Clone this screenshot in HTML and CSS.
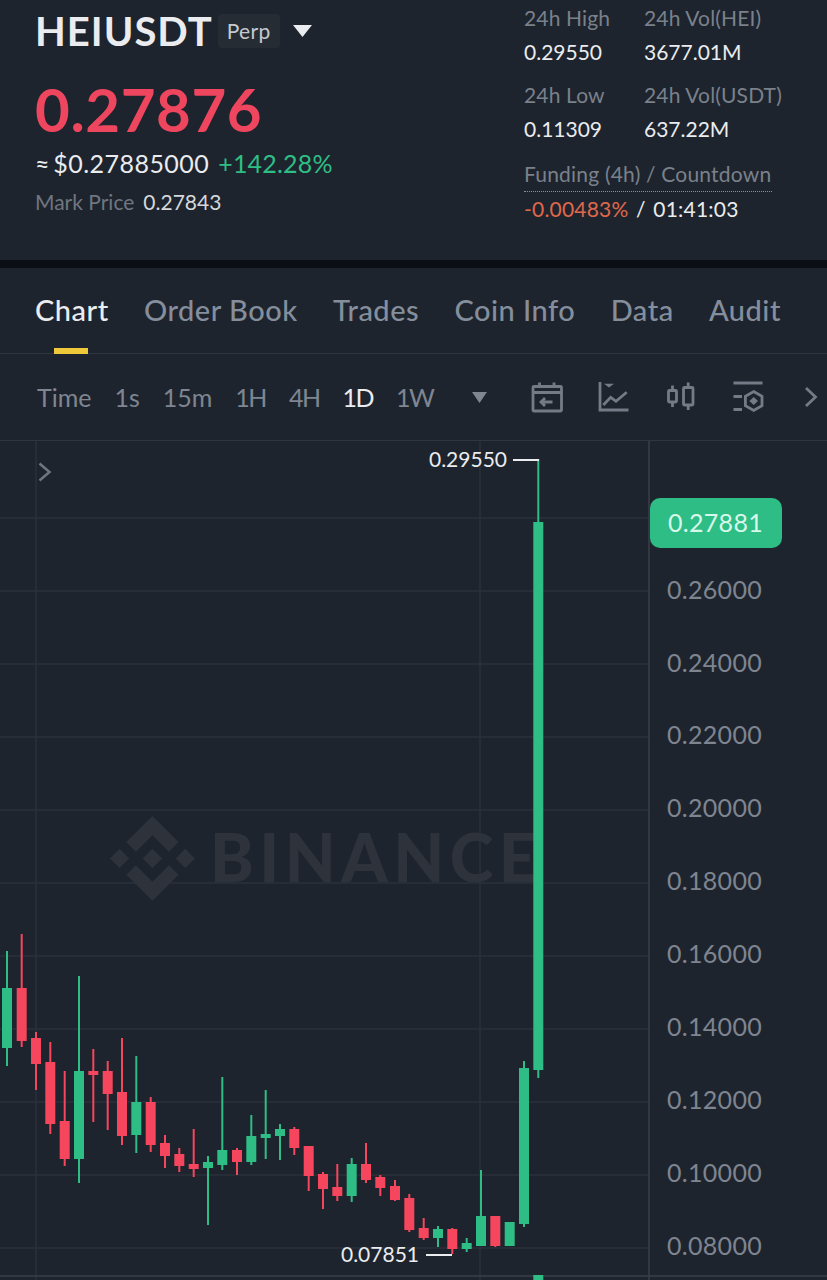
FILE: index.html
```html
<!DOCTYPE html>
<html lang="en">
<head>
    <meta charset="UTF-8">
    <meta name="viewport" content="width=device-width, initial-scale=1.0">
    <title>HEIUSDT Perp</title>
    <link rel="stylesheet" href="styles.css">
</head>
<body>
    <section class="summary">
        <div class="summary-left">
            <div class="symbol-row">
                <h1>HEIUSDT</h1>
                <span class="badge">Perp</span>
                <svg class="symbol-caret" width="19" height="12" viewBox="0 0 19 12"><path d="M0 0H19L9.500 12Z"/></svg>
            </div>
            <div class="price">0.27876</div>
            <div class="price-sub">
                <span class="usd"><span class="approx">≈</span> $0.27885000</span>
                <span class="change">+142.28%</span>
            </div>
            <div class="mark">
                <span class="mark-label">Mark Price</span>
                <span class="mark-value">0.27843</span>
            </div>
        </div>
        <div class="summary-right">
            <div class="stats">
                <div class="stat-label">24h High</div>
                <div class="stat-label">24h Vol(HEI)</div>
                <div class="stat-value">0.29550</div>
                <div class="stat-value">3677.01M</div>
                <div class="stat-label row-gap">24h Low</div>
                <div class="stat-label row-gap">24h Vol(USDT)</div>
                <div class="stat-value">0.11309</div>
                <div class="stat-value">637.22M</div>
            </div>
            <div class="funding">
                <div class="funding-label">Funding (4h) / Countdown</div>
                <div class="stat-value funding-value"><span class="negative">-0.00483%</span> <span class="slash">/</span> 01:41:03</div>
            </div>
        </div>
    </section>

    <div class="divider"></div>

    <nav class="tabs">
        <a class="tab active" href="#">Chart</a>
        <a class="tab" href="#">Order Book</a>
        <a class="tab" href="#">Trades</a>
        <a class="tab" href="#">Coin Info</a>
        <a class="tab" href="#">Data</a>
        <a class="tab" href="#">Audit</a>
    </nav>

    <div class="toolbar">
        <div class="intervals">
            <span>Time</span>
            <span>1s</span>
            <span>15m</span>
            <span class="caps">1H</span>
            <span class="caps">4H</span>
            <span class="caps active">1D</span>
            <span class="caps">1W</span>
        </div>
        <svg class="interval-caret" width="15" height="11" viewBox="0 0 15 11"><path d="M0 0H15L7.500 11Z"/></svg>
        <div class="tools">
            <svg class="tool" width="34" height="34" viewBox="0 0 34 34">
                <rect x="3" y="6.500" width="28.500" height="24.500" rx="1"/>
                <path d="M3 12.500H31.500M9.500 2.500V6.500M24 2.500V6.500M22.500 22H11M15 18L11 22L15 26"/>
            </svg>
            <svg class="tool" width="34" height="34" viewBox="0 0 34 34">
                <path d="M3 2V30H31.500M6.300 25L13.700 17.300L19 21.300L29.700 12.300"/>
                <path class="tool-fill" d="M7 3.700H17L12 7.500Z"/>
            </svg>
            <svg class="tool" width="34" height="34" viewBox="0 0 34 34">
                <rect x="4.500" y="10.500" width="8" height="11.500" rx="1"/>
                <rect x="19.500" y="7.500" width="9.500" height="17.500" rx="1"/>
                <path d="M8.500 5.500V10.500M8.500 22V27M24.200 2.500V7.500M24.200 25V30"/>
            </svg>
            <svg class="tool" width="34" height="34" viewBox="0 0 34 34">
                <path d="M2.500 3H31.500M2.500 16.500H11M2.500 29.500H11M22.700 11.500L31 16.200V25.800L22.700 30.500L14.400 25.800V16.200Z"/>
                <path class="tool-fill" d="M22.700 17L27 21L22.700 25L18.400 21Z"/>
            </svg>
        </div>
        <svg class="tool next" width="16" height="22" viewBox="0 0 16 22"><path d="M3 2L12.500 11L3 20"/></svg>
    </div>

    <div class="chart">
        <svg class="chart-svg" width="827" height="839" viewBox="0 441 827 839">
            <!-- grid -->
            <path class="grid" d="M0 518H649M0 591H649M0 664H649M0 737H649M0 810H649M0 883H649M0 956H649M0 1029H649M0 1102H649M0 1175H649M0 1248H649M36 441V1280M480 441V1280"/>
            <path class="grid-strong" d="M649 441V1280M0 1276H827"/>

            <!-- watermark -->
            <g class="watermark">
                <path transform="translate(110 816) scale(0.67)" d="M38.730 53.200L63.320 28.620L87.920 53.220L102.220 38.910L63.320 0L24.430 38.900ZM0 63.310L14.300 49L28.610 63.310L14.300 77.610ZM38.730 73.410L63.320 98L87.920 73.400L102.230 87.690L63.320 126.610L24.430 87.720ZM98 63.310L112.300 49.010L126.610 63.310L112.300 77.610ZM77.830 63.300L63.320 48.780L48.810 63.280L63.320 77.780Z"/>
                <text class="watermark-text" x="210" y="882">BINANCE</text>
            </g>

            <!-- candles -->
            <path class="wick up" d="M7 951V1066"/><path class="body up" d="M7 988V1048"/>
            <path class="wick down" d="M21.700 934V1047"/><path class="body down" d="M21.700 988V1041"/>
            <path class="wick down" d="M36 1032V1090"/><path class="body down" d="M36 1038V1064"/>
            <path class="wick down" d="M50.300 1042V1134"/><path class="body down" d="M50.300 1062V1124"/>
            <path class="wick down" d="M64.700 1071V1166"/><path class="body down" d="M64.700 1121V1159"/>
            <path class="wick up" d="M79 976V1183"/><path class="body up" d="M79 1071V1159"/>
            <path class="wick down" d="M93.300 1049V1122"/><path class="body down" d="M93.300 1071V1075"/>
            <path class="wick down" d="M107.700 1061V1130"/><path class="body down" d="M107.700 1071V1094"/>
            <path class="wick down" d="M122 1038V1145"/><path class="body down" d="M122 1092V1136"/>
            <path class="wick up" d="M136.300 1056V1153"/><path class="body up" d="M136.300 1102V1135"/>
            <path class="wick down" d="M150.700 1097V1152"/><path class="body down" d="M150.700 1102V1145"/>
            <path class="wick down" d="M165 1135V1168"/><path class="body down" d="M165 1143V1156"/>
            <path class="wick down" d="M179.300 1148V1172"/><path class="body down" d="M179.300 1154V1166"/>
            <path class="wick down" d="M193.700 1129V1177"/><path class="body down" d="M193.700 1164V1169"/>
            <path class="wick up" d="M208 1156V1225"/><path class="body up" d="M208 1162V1168"/>
            <path class="wick up" d="M222.300 1077V1170"/><path class="body up" d="M222.300 1150V1165"/>
            <path class="wick down" d="M237 1148V1175"/><path class="body down" d="M237 1150V1162"/>
            <path class="wick up" d="M251.300 1115V1165"/><path class="body up" d="M251.300 1136V1162"/>
            <path class="wick up" d="M265.700 1090V1159"/><path class="body up" d="M265.700 1134V1138"/>
            <path class="wick up" d="M280 1124V1160"/><path class="body up" d="M280 1129V1136"/>
            <path class="wick down" d="M294.300 1127V1155"/><path class="body down" d="M294.300 1129V1148"/>
            <path class="wick down" d="M308.700 1146V1191"/><path class="body down" d="M308.700 1146V1176"/>
            <path class="wick down" d="M323 1172V1209"/><path class="body down" d="M323 1174V1189"/>
            <path class="wick down" d="M337.300 1164V1201"/><path class="body down" d="M337.300 1187V1196"/>
            <path class="wick up" d="M351.700 1158V1202"/><path class="body up" d="M351.700 1164V1196"/>
            <path class="wick down" d="M366 1143V1183"/><path class="body down" d="M366 1164V1180"/>
            <path class="wick down" d="M380.300 1175V1196"/><path class="body down" d="M380.300 1177V1188"/>
            <path class="wick down" d="M395 1180V1201"/><path class="body down" d="M395 1186V1200"/>
            <path class="wick down" d="M409.300 1194V1232"/><path class="body down" d="M409.300 1198V1230"/>
            <path class="wick down" d="M423.700 1218V1240"/><path class="body down" d="M423.700 1228V1238"/>
            <path class="wick up" d="M438 1226V1247"/><path class="body up" d="M438 1229V1238"/>
            <path class="wick down" d="M452.300 1228V1254"/><path class="body down" d="M452.300 1229V1249"/>
            <path class="wick up" d="M466.700 1238V1252"/><path class="body up" d="M466.700 1243V1249"/>
            <path class="wick up" d="M481 1170V1246"/><path class="body up" d="M481 1216V1246"/>
            <path class="wick down" d="M495.300 1216V1247"/><path class="body down" d="M495.300 1216V1246"/>
            <path class="wick up" d="M509.700 1222V1246"/><path class="body up" d="M509.700 1222V1246"/>
            <path class="wick up" d="M524 1061V1227"/><path class="body up" d="M524 1068V1224"/>
            <path class="wick up" d="M538.300 459V1078"/><path class="body up" d="M538.300 522V1070"/>
            <path class="body up" d="M538.300 1275V1280"/>

            <!-- high / low markers -->
            <text class="marker" x="507" y="467" text-anchor="end">0.29550</text>
            <path class="marker-line" d="M513 460H539"/>
            <text class="marker" x="419" y="1262" text-anchor="end">0.07851</text>
            <path class="marker-line" d="M426 1255H452"/>

            <!-- price axis -->
            <text class="axis" x="667" y="599">0.26000</text>
            <text class="axis" x="667" y="672">0.24000</text>
            <text class="axis" x="667" y="744">0.22000</text>
            <text class="axis" x="667" y="817">0.20000</text>
            <text class="axis" x="667" y="890">0.18000</text>
            <text class="axis" x="667" y="963">0.16000</text>
            <text class="axis" x="667" y="1036">0.14000</text>
            <text class="axis" x="667" y="1109">0.12000</text>
            <text class="axis" x="667" y="1182">0.10000</text>
            <text class="axis" x="667" y="1255">0.08000</text>

            <rect class="last-price" x="650" y="498" width="132" height="50" rx="10"/>
            <text class="last-price-text" x="668" y="532">0.27881</text>

            <path class="chart-toggle" d="M39.500 463.500L49.500 472L39.500 480.500"/>
        </svg>
    </div>
</body>
</html>
```

FILE: styles.css
```css
* {
    margin: 0;
    padding: 0;
    box-sizing: border-box;
    font-family: 'Lato', sans-serif;
}
html, body {
    width: 827px;
    height: 1280px;
    overflow: hidden;
}
body {
    background-color: #1e242d;
    color: #eaecef;
}
.summary {
    display: flex;
    justify-content: space-between;
    height: 260px;
}
.summary-left {
    padding: 11px 0 0 35px;
}
.symbol-row {
    display: flex;
    align-items: center;
    height: 40px;
}
h1 {
    font-size: 40px;
    font-weight: 700;
    line-height: 38px;
    letter-spacing: 1px;
    color: #eaecef;
}
.badge {
    margin-left: 5px;
    padding: 0 9px;
    height: 34px;
    line-height: 34px;
    font-size: 21px;
    letter-spacing: 0.3px;
    color: #c5c9cf;
    background-color: #262c34;
    border-radius: 4px;
}
.symbol-caret {
    margin-left: 13px;
    fill: #eaecef;
}
.price {
    margin-top: 28px;
    font-size: 60px;
    font-weight: 700;
    line-height: 60px;
    letter-spacing: 0.6px;
    color: #ef4660;
}
.price-sub {
    display: flex;
    gap: 9px;
    margin-top: 9px;
    font-size: 25px;
    line-height: 30px;
}
.usd {
    letter-spacing: 0.450px;
}
.approx {
    letter-spacing: -3px;
}
.change {
    letter-spacing: 0.200px;
    color: #2ebd85;
}
.mark {
    display: flex;
    gap: 9px;
    margin-top: 11px;
    font-size: 21px;
    line-height: 26px;
}
.mark-label {
    color: #6f7681;
}
.mark-value {
    color: #d5d8dc;
}
.summary-right {
    width: 303px;
    padding-top: 1px;
}
.stats {
    display: grid;
    grid-template-columns: 120px auto;
    font-size: 21px;
}
.stat-label {
    line-height: 34px;
    letter-spacing: 0.150px;
    color: #7a818b;
}
.row-gap {
    margin-top: 9px;
}
.stat-value {
    font-size: 21px;
    line-height: 34px;
    color: #eaecef;
}
.funding {
    margin-top: 11px;
}
.funding-label {
    width: 248px;
    font-size: 21px;
    line-height: 34px;
    letter-spacing: 0.2px;
    color: #7a818b;
    border-bottom: 1px dotted #8a919b;
}
.funding-value {
    letter-spacing: 0.200px;
}
.negative {
    color: #e0684c;
}
.slash {
    margin: 0 2px;
}
.divider {
    height: 8px;
    background-color: #0b0e14;
}
.tabs {
    display: flex;
    gap: 35.300px;
    height: 86px;
    padding: 24px 0 0 35px;
    border-bottom: 1px solid #30363f;
}
.tab {
    position: relative;
    height: 62px;
    font-size: 29px;
    font-weight: 500;
    line-height: 36px;
    letter-spacing: 0.5px;
    color: #848e9c;
    text-decoration: none;
}
.tab.active {
    color: #eaecef;
}
.tab.active::after {
    content: "";
    position: absolute;
    left: 19px;
    bottom: 0;
    width: 34px;
    height: 6px;
    background-color: #f0c93a;
}
.toolbar {
    display: flex;
    align-items: center;
    height: 87px;
    padding-left: 37px;
    border-bottom: 1px solid #30363f;
}
.intervals {
    display: flex;
    gap: 23px;
    width: 435px;
    font-size: 25px;
    color: #7f8692;
}
.intervals .caps {
    letter-spacing: -1.500px;
}
.intervals .active {
    color: #eaecef;
}
.interval-caret {
    fill: #7f8692;
}
.tools {
    display: flex;
    gap: 33px;
    margin-left: 43px;
}
.tool {
    fill: none;
    stroke: #747b87;
    stroke-width: 2.800;
}
.tool-fill {
    fill: #747b87;
    stroke: none;
}
.next {
    margin-left: 38px;
    flex-shrink: 0;
}
.chart-svg {
    display: block;
}
.grid {
    fill: none;
    stroke: #2a303a;
    stroke-width: 1.500;
}
.grid-strong {
    fill: none;
    stroke: #393f49;
    stroke-width: 1.500;
}
.watermark {
    fill: #2e323b;
}
.watermark-text {
    font-size: 66px;
    font-weight: 900;
    letter-spacing: 5.500px;
}
.wick, .body {
    fill: none;
}
.wick {
    stroke-width: 2;
}
.body {
    stroke-width: 10;
}
.up {
    stroke: #2ebd85;
}
.down {
    stroke: #f6465d;
}
.marker {
    font-size: 21px;
    fill: #eaecef;
}
.marker-line {
    fill: none;
    stroke: #eaecef;
    stroke-width: 2;
}
.axis {
    font-size: 25px;
    letter-spacing: 0.300px;
    fill: #7e8590;
}
.last-price {
    fill: #2ebd85;
}
.last-price-text {
    font-size: 25px;
    letter-spacing: 0.300px;
    fill: #d8f8ea;
}
.chart-toggle {
    fill: none;
    stroke: #6f7682;
    stroke-width: 2.500;
}
```
